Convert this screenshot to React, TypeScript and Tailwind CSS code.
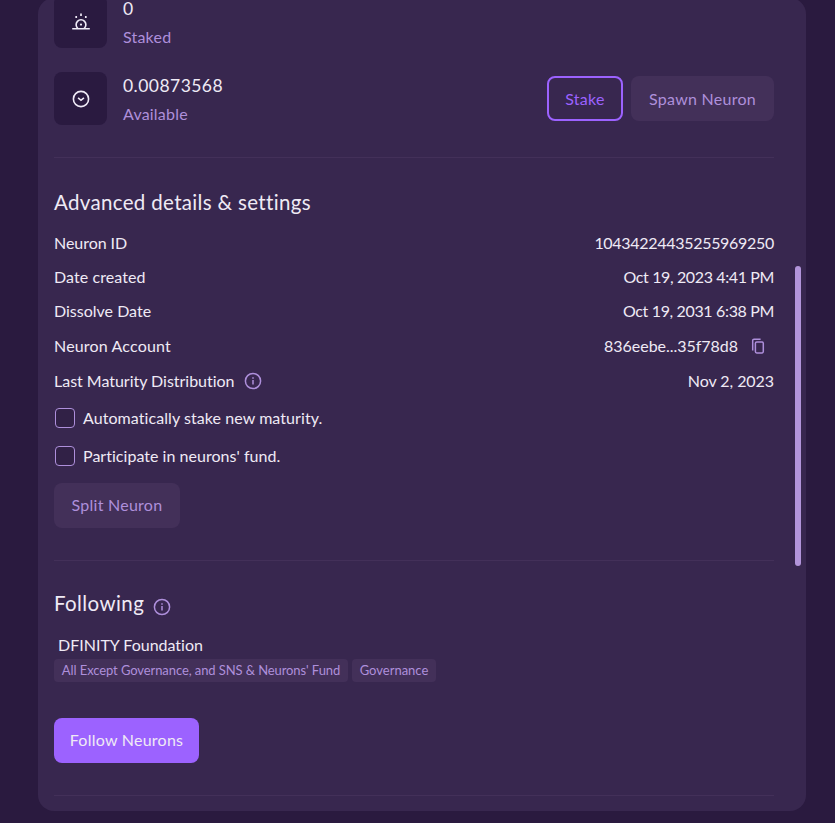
import type { ReactNode } from "react";

function InfoIcon({ className = "" }: { className?: string }) {
  return (
    <svg className={className} width="18" height="18" viewBox="0 0 18 18" fill="none" stroke="#ae8fdb" strokeWidth="1.5">
      <circle cx="9" cy="9" r="7.6" />
      <path d="M9 8.1v4.4M9 5.3v1.5" />
    </svg>
  );
}

function CopyIcon() {
  return (
    <svg width="14" height="16" viewBox="0 0 14 16" fill="none" stroke="#ae8fdb" strokeWidth="1.5">
      <path d="M1.7 12.4V2.5A1.3 1.3 0 0 1 3 1.2h6.6" />
      <rect x="4.4" y="3.9" width="7.9" height="11" rx="1.3" />
    </svg>
  );
}

function StakedIcon() {
  return (
    <svg width="20" height="20" viewBox="0 0 20 20" fill="none" stroke="#f0ebf7" strokeWidth="1.6">
      <path d="M1.2 16.8h17.6" />
      <path d="M6.9 16.5a4.9 4.9 0 1 1 6.2 0" />
      <path d="M10 1.5v2.4M5.2 3.9v2M14.8 3.9v2" strokeWidth="1.7" />
      <circle cx="10" cy="12.6" r="1.1" fill="#f0ebf7" stroke="none" />
    </svg>
  );
}

function AvailableIcon() {
  return (
    <svg width="20" height="20" viewBox="0 0 20 20" fill="none" stroke="#f0ebf7" strokeWidth="1.6">
      <circle cx="10" cy="10" r="7.6" />
      <path d="M7.1 8.8l2.9 2.5 2.9-2.5" />
    </svg>
  );
}

function Maturity({ icon, value, label, children }: { icon: ReactNode; value: string; label: string; children?: ReactNode }) {
  return (
    <div className="flex h-[53px] shrink-0 items-center">
      <div className="flex size-[53px] items-center justify-center rounded-lg bg-[#2a1a40]">{icon}</div>
      <div className="ml-4 flex flex-1 flex-col pt-0.5">
        <div className="h-[29px] pt-[6px] text-[17.5px] leading-[14px] tracking-[0.46px]">{value}</div>
        <div className="h-6 text-base leading-6 tracking-[0.2px] text-[#ae8fdb]">{label}</div>
      </div>
      {children}
    </div>
  );
}

function Row({ label, className, children }: { label: ReactNode; className: string; children: ReactNode }) {
  return (
    <div className={`flex shrink-0 items-center justify-between ${className}`}>
      <div className="flex items-center">{label}</div>
      <div className="flex items-center">{children}</div>
    </div>
  );
}

function Check({ className, children }: { className: string; children: ReactNode }) {
  return (
    <label className={`flex shrink-0 items-center ${className}`}>
      <span className="ml-px mr-2 size-5 rounded-[4px] border border-[#ae8fdb] bg-[#312146]" />
      {children}
    </label>
  );
}

const button = "flex h-[45px] shrink-0 items-center justify-center rounded-lg text-base tracking-[0.25px]";

export default function App() {
  return (
    <div className="h-[823px] w-[835px] overflow-hidden bg-[#2a1a3f] pl-[38px] font-[Lato,sans-serif] text-base text-[#efeaf5] [font-variant-ligatures:none]">
      <main className="-mt-0.5 flex h-[813px] w-[768px] justify-between overflow-hidden rounded-2xl bg-[#38274f]">
        <div className="-mt-[3px] ml-4 flex h-[816px] w-[720px] flex-col">
          <Maturity icon={<StakedIcon />} value="0" label="Staked" />
          <div className="h-6 shrink-0" />
          <Maturity icon={<AvailableIcon />} value="0.00873568" label="Available">
            <div className="flex gap-2">
              <button className={`${button} w-[76px] border-2 border-[#9c62ff] text-[#9c62ff]`}>Stake</button>
              <button className={`${button} w-[143px] bg-[#433059] text-[#ae8fdb]`}>Spawn Neuron</button>
            </div>
          </Maturity>
          <hr className="mt-8 shrink-0 border-[#433059]" />
          <h2 className="mt-[29px] h-[39px] shrink-0 text-[20.5px] leading-[30px] tracking-[0.33px]">Advanced details &amp; settings</h2>
          <Row className="h-[34px]" label={<span className="tracking-[-0.05px]">Neuron ID</span>}>
            <span className="tracking-[-0.3px]">10434224435255969250</span>
          </Row>
          <Row className="h-[34px]" label={<span className="tracking-[0.08px]">Date created</span>}>
            <span className="tracking-[-0.38px]">Oct 19, 2023 4:41 PM</span>
          </Row>
          <Row className="h-[34px]" label="Dissolve Date">
            <span className="tracking-[-0.35px]">Oct 19, 2031 6:38 PM</span>
          </Row>
          <Row className="h-9" label={<span className="tracking-[0.17px]">Neuron Account</span>}>
            <span className="tracking-[-0.03px]">836eebe...35f78d8</span>
            <span className="ml-[13px] mr-[9px]"><CopyIcon /></span>
          </Row>
          <Row className="h-[34px]" label={<><span className="tracking-[-0.02px]">Last Maturity Distribution</span><InfoIcon className="ml-[9px]" /></>}>
            <span className="tracking-[-0.07px]">Nov 2, 2023</span>
          </Row>
          <Check className="h-10"><span className="tracking-[0.07px]">Automatically stake new maturity.</span></Check>
          <Check className="h-9"><span className="tracking-[0.03px]">Participate in neurons' fund.</span></Check>
          <button className={`${button} mt-[9px] w-[126px] bg-[#433059] pb-0.5 text-[#ae8fdb]`}>Split Neuron</button>
          <hr className="mt-8 shrink-0 border-[#433059]" />
          <h2 className="mt-[27px] flex h-[31px] shrink-0 items-start text-[20.5px] leading-[30px] tracking-[0.4px]">
            <span>Following</span>
            <InfoIcon className="ml-[9px] mt-[10px]" />
          </h2>
          <p className="ml-1 mt-3.5 h-[26px] shrink-0 text-base leading-6">DFINITY Foundation</p>
          <div className="flex h-[23px] shrink-0 gap-1 text-[13px] text-[#ae8fdb]">
            <span className="flex w-[294px] items-center justify-center rounded bg-[#433059] tracking-[-0.09px]">All Except Governance, and SNS &amp; Neurons' Fund</span>
            <span className="flex w-[84px] items-center justify-center rounded bg-[#433059]">Governance</span>
          </div>
          <button className={`${button} mt-9 w-[145px] bg-[#9c62ff] pb-0.5`}>Follow Neurons</button>
          <hr className="mt-8 shrink-0 border-[#433059]" />
        </div>
        <div className="mr-[5px] mt-[268px] h-[300px] w-1.5 rounded-full bg-[#b294da]" />
      </main>
    </div>
  );
}
